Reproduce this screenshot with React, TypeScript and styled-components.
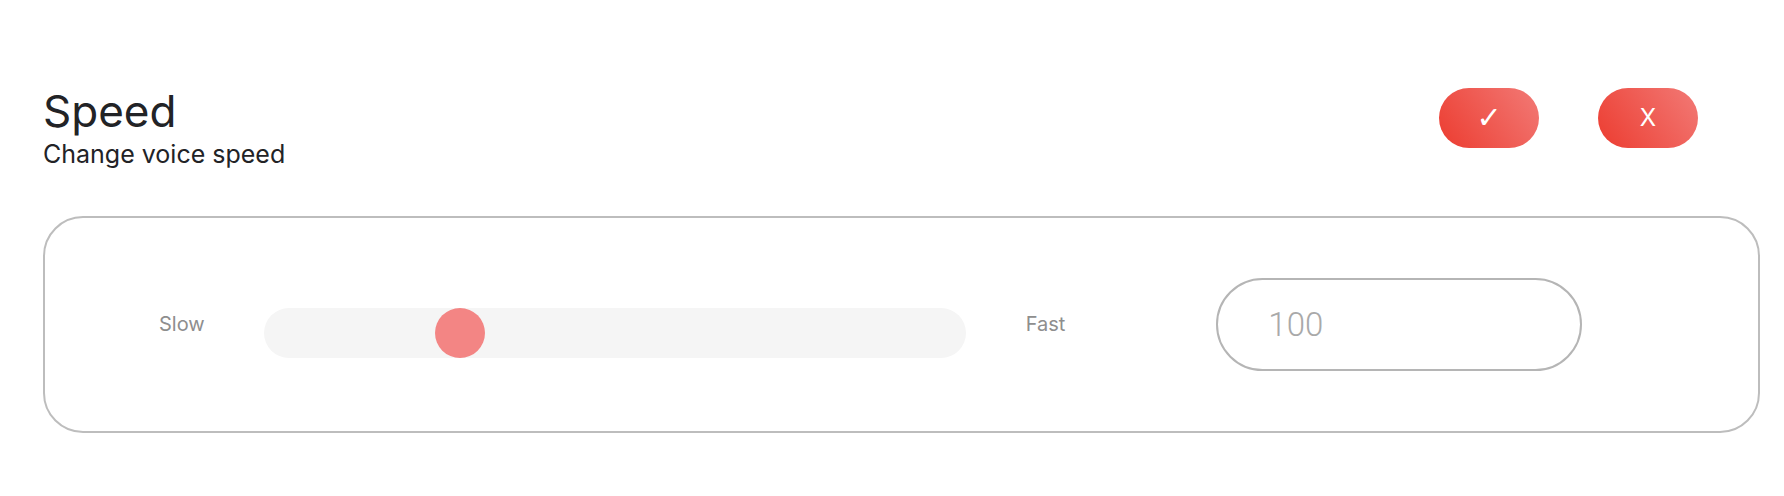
import styled, { createGlobalStyle } from "styled-components";

const GlobalStyle = createGlobalStyle`
  body {
    margin: 0;
    background: #fff;
    font-family: Inter, "Noto Sans", sans-serif;
  }
`;

const Page = styled.div`
  padding: 85px 24px 40px 43px;
`;

const Header = styled.div`
  display: flex;
  justify-content: space-between;
  align-items: flex-start;
  padding-right: 62px;
`;

const Title = styled.h2`
  margin: 0;
  font-size: 44px;
  line-height: 52px;
  font-weight: 400;
  color: #222326;
`;

const Subtitle = styled.p`
  margin: 2px 0 0;
  font-size: 25px;
  line-height: 30px;
  color: #222326;
`;

const Actions = styled.div`
  display: flex;
  gap: 59px;
  margin-top: 3px;
`;

const ActionButton = styled.button<{ $symbol?: boolean }>`
  width: 100px;
  height: 60px;
  padding: 0;
  border: none;
  border-radius: 30px;
  background: linear-gradient(55deg, #ec3c30 0%, #f27a76 100%);
  color: #fff;
  font-family: ${(p) => (p.$symbol ? `"DejaVu Sans", sans-serif` : `Inter, sans-serif`)};
  font-size: ${(p) => (p.$symbol ? 30 : 24)}px;
  font-weight: ${(p) => (p.$symbol ? 700 : 400)};
  line-height: 60px;
  cursor: pointer;
`;

const Card = styled.div`
  display: flex;
  align-items: center;
  box-sizing: border-box;
  height: 217px;
  margin-top: 47px;
  padding-left: 114px;
  border: 2px solid #bdbdbd;
  border-radius: 40px;
`;

const EndLabel = styled.span<{ $gap: number }>`
  margin: -2px ${(p) => p.$gap}px 0 0;
  font-size: 20px;
  color: #8e8e8e;
`;

const Track = styled.div`
  position: relative;
  width: 702px;
  height: 50px;
  margin: 16px 60px 0 0;
  border-radius: 25px;
  background: #f5f5f5;
`;

const Thumb = styled.div`
  position: absolute;
  top: 0;
  width: 50px;
  height: 50px;
  border-radius: 50%;
  background: #f38584;
`;

const ValueInput = styled.input`
  box-sizing: border-box;
  width: 366px;
  height: 93px;
  padding: 0 0 0 50px;
  border: 2px solid #b5b5b5;
  border-radius: 47px;
  outline: none;
  font-family: Roboto, sans-serif;
  font-size: 33px;
  font-weight: 300;
  color: #555;

  &::placeholder {
    color: #a9a9a9;
  }
`;

const min = 0;
const max = 380;
const value = 100;

export default function App() {
  const ratio = (value - min) / (max - min);

  return (
    <>
      <GlobalStyle />
      <Page>
        <Header>
          <div>
            <Title>Speed</Title>
            <Subtitle>Change voice speed</Subtitle>
          </div>
          <Actions>
            <ActionButton $symbol>✓</ActionButton>
            <ActionButton>X</ActionButton>
          </Actions>
        </Header>
        <Card>
          <EndLabel $gap={59}>Slow</EndLabel>
          <Track>
            <Thumb style={{ left: ratio * (702 - 50) }} />
          </Track>
          <EndLabel $gap={151}>Fast</EndLabel>
          <ValueInput placeholder="100" />
        </Card>
      </Page>
    </>
  );
}
